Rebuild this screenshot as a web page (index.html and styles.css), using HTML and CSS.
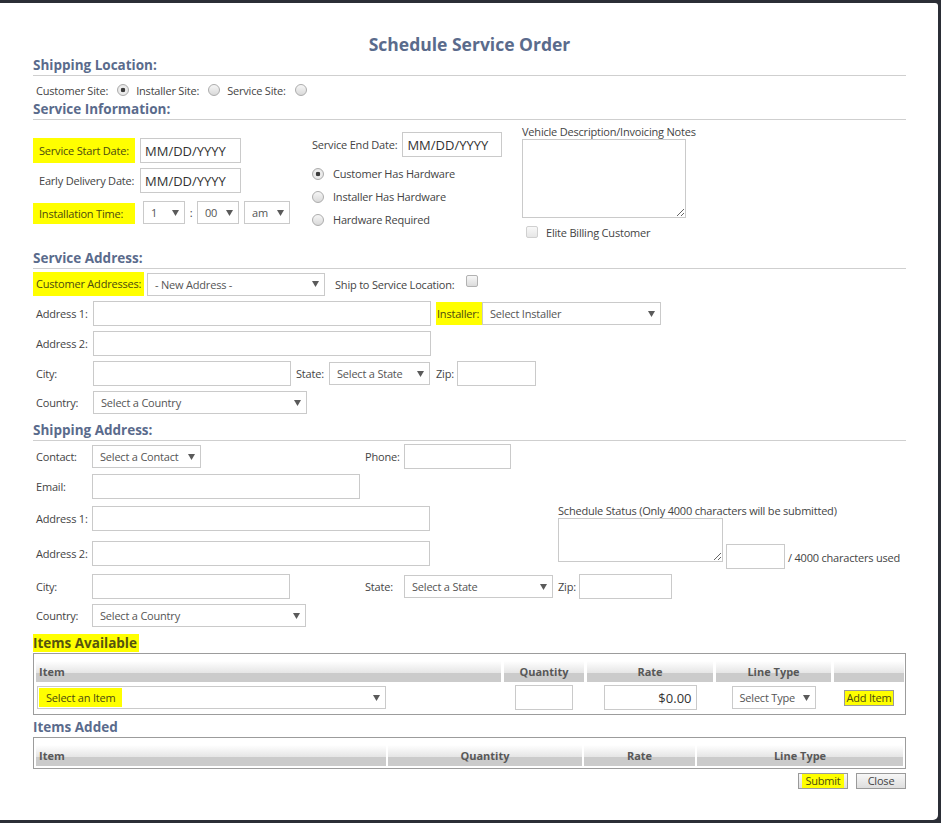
FILE: index.html
```html
<!DOCTYPE html>
<html lang="en">
<head>
<meta charset="utf-8">
<title>Schedule Service Order</title>
<link rel="stylesheet" href="styles.css">
</head>
<body>
<div class="modal">
  <h1 class="title">Schedule Service Order</h1>

  <h2 class="sec sec-shiploc">Shipping Location:</h2>
  <div class="loc-row">
    <span class="lbl">Customer Site:</span><span class="radio on loc-radio"></span>
    <span class="lbl">Installer Site:</span><span class="radio loc-radio"></span>
    <span class="lbl">Service Site:</span><span class="radio loc-radio"></span>
  </div>

  <h2 class="sec sec-info">Service Information:</h2>
  <div class="info">
    <div class="col1">
      <div class="frow">
        <span class="flabel hl">Service Start Date:</span>
        <input class="date" type="text" value="MM/DD/YYYY">
      </div>
      <div class="frow">
        <span class="flabel">Early Delivery Date:</span>
        <input class="date" type="text" value="MM/DD/YYYY">
      </div>
      <div class="frow trow">
        <span class="flabel hl tlabel">Installation Time:</span>
        <div class="sel w42 first"><span>1</span><svg class="arr" width="7" height="6" viewBox="0 0 7 6"><path d="M0 0h7L3.5 6z"/></svg></div>
        <span class="colon">:</span>
        <div class="sel w42"><span>00</span><svg class="arr" width="7" height="6" viewBox="0 0 7 6"><path d="M0 0h7L3.5 6z"/></svg></div>
        <div class="sel w46 ampm"><span>am</span><svg class="arr" width="7" height="6" viewBox="0 0 7 6"><path d="M0 0h7L3.5 6z"/></svg></div>
      </div>
    </div>
    <div class="col2">
      <div class="endrow">
        <span class="lbl">Service End Date:</span>
        <input class="date w100" type="text" value="MM/DD/YYYY">
      </div>
      <div class="rrow first"><span class="radio on"></span><span class="rlabel">Customer Has Hardware</span></div>
      <div class="rrow"><span class="radio"></span><span class="rlabel">Installer Has Hardware</span></div>
      <div class="rrow"><span class="radio"></span><span class="rlabel">Hardware Required</span></div>
    </div>
    <div class="col3">
      <div class="tlabel-top">Vehicle Description/Invoicing Notes</div>
      <textarea class="notes"></textarea>
      <div class="cbrow"><span class="checkbox disabled"></span><span class="cblabel">Elite Billing Customer</span></div>
    </div>
  </div>

  <h2 class="sec sec-addr">Service Address:</h2>
  <div class="arow arow1">
    <span class="hl calabel">Customer Addresses:</span>
    <div class="sel w178"><span>- New Address -</span><svg class="arr" width="7" height="6" viewBox="0 0 7 6"><path d="M0 0h7L3.5 6z"/></svg></div>
    <span class="lbl shiploc">Ship to Service Location:</span>
    <span class="checkbox shipcb"></span>
  </div>
  <div class="arow">
    <span class="alabel">Address 1:</span>
    <input class="txt w338" type="text">
    <span class="hl instlabel">Installer:</span>
    <div class="sel w179"><span>Select Installer</span><svg class="arr" width="7" height="6" viewBox="0 0 7 6"><path d="M0 0h7L3.5 6z"/></svg></div>
  </div>
  <div class="arow">
    <span class="alabel">Address 2:</span>
    <input class="txt w338" type="text">
  </div>
  <div class="arow">
    <span class="alabel">City:</span>
    <input class="txt w198" type="text">
    <span class="lbl statelbl">State:</span>
    <div class="sel w101"><span>Select a State</span><svg class="arr" width="7" height="6" viewBox="0 0 7 6"><path d="M0 0h7L3.5 6z"/></svg></div>
    <span class="lbl ziplbl">Zip:</span>
    <input class="txt w79" type="text">
  </div>
  <div class="arow srow">
    <span class="alabel">Country:</span>
    <div class="sel w214"><span>Select a Country</span><svg class="arr" width="7" height="6" viewBox="0 0 7 6"><path d="M0 0h7L3.5 6z"/></svg></div>
  </div>

  <h2 class="sec sec-shipaddr">Shipping Address:</h2>
  <div class="brow brow-first">
    <div class="bleft">
      <span class="blabel">Contact:</span>
      <div class="sel w109"><span>Select a Contact</span><svg class="arr" width="7" height="6" viewBox="0 0 7 6"><path d="M0 0h7L3.5 6z"/></svg></div>
    </div>
    <span class="lbl rlbl">Phone:</span>
    <input class="txt w107" type="text">
  </div>
  <div class="brow">
    <span class="blabel">Email:</span>
    <input class="txt w268" type="text">
  </div>
  <div class="mid">
    <div class="mid-left">
      <div class="brow m7">
        <span class="blabel">Address 1:</span>
        <input class="txt w338" type="text">
      </div>
      <div class="brow m10">
        <span class="blabel">Address 2:</span>
        <input class="txt w338" type="text">
      </div>
    </div>
    <div class="mid-right">
      <div class="status-label">Schedule Status (Only 4000 characters will be submitted)</div>
      <div class="status-row">
        <textarea class="status"></textarea>
        <input class="txt count" type="text">
        <span class="used">/ 4000 characters used</span>
      </div>
    </div>
  </div>
  <div class="brow">
    <div class="bleft">
      <span class="blabel">City:</span>
      <input class="txt w198" type="text">
    </div>
    <span class="lbl rlbl">State:</span>
    <div class="sel w149"><span>Select a State</span><svg class="arr" width="7" height="6" viewBox="0 0 7 6"><path d="M0 0h7L3.5 6z"/></svg></div>
    <span class="lbl zip2">Zip:</span>
    <input class="txt w93" type="text">
  </div>
  <div class="brow srow">
    <span class="blabel">Country:</span>
    <div class="sel w214"><span>Select a Country</span><svg class="arr" width="7" height="6" viewBox="0 0 7 6"><path d="M0 0h7L3.5 6z"/></svg></div>
  </div>

  <h3 class="items-title"><span class="hl-h">Items Available</span></h3>
  <div class="itembox avail">
    <div class="grid avail-grid">
      <div class="th left">Item</div>
      <div class="th">Quantity</div>
      <div class="th">Rate</div>
      <div class="th">Line Type</div>
      <div class="th"></div>
    </div>
    <div class="grid avail-grid irow">
      <div class="cell-left">
        <div class="sel w349 itemsel"><span class="hl-sel">Select an Item</span><svg class="arr" width="7" height="6" viewBox="0 0 7 6"><path d="M0 0h7L3.5 6z"/></svg></div>
      </div>
      <div class="cell"><input class="txt w58" type="text"></div>
      <div class="cell"><input class="txt w93 rate" type="text" value="$0.00"></div>
      <div class="cell"><div class="sel w84"><span>Select Type</span><svg class="arr" width="7" height="6" viewBox="0 0 7 6"><path d="M0 0h7L3.5 6z"/></svg></div></div>
      <div class="cell"><button class="btn hlbtn" type="button">Add Item</button></div>
    </div>
  </div>

  <h3 class="items-title added">Items Added</h3>
  <div class="itembox added-box">
    <div class="grid added-grid">
      <div class="th left">Item</div>
      <div class="th">Quantity</div>
      <div class="th">Rate</div>
      <div class="th">Line Type</div>
    </div>
  </div>

  <div class="actions">
    <button class="btn" type="button"><span class="hl-btn">Submit</span></button>
    <button class="btn" type="button">Close</button>
  </div>
</div>
</body>
</html>
```

FILE: styles.css
```css
* { box-sizing: border-box; }

html, body {
  margin: 0;
  padding: 0;
}

body {
  width: 941px;
  height: 823px;
  overflow: hidden;
  background: #2b2e36;
  font-family: "Open Sans", "DejaVu Sans", sans-serif;
  font-size: 11px;
  letter-spacing: -0.2px;
  color: #444;
}

.modal {
  width: 938px;
  height: 817px;
  margin-top: 3px;
  background: #fff;
  border-radius: 0 3px 5px 0;
  padding: 0 32px 0 33px;
}

/* headings */
.title {
  margin: 0;
  padding-top: 31px;
  font-size: 17.5px;
  line-height: 20px;
  font-weight: 700;
  letter-spacing: 0;
  text-align: center;
  color: #5a6b8c;
}

.sec {
  margin: 0;
  font-size: 13.5px;
  line-height: 16px;
  font-weight: 700;
  letter-spacing: 0;
  color: #5a6b8c;
  padding-bottom: 2px;
  border-bottom: 1px solid #cfcfcf;
}
.sec-shiploc { margin-top: 3px; }
.sec-info { margin-top: 3px; }
.sec-addr { margin-top: 0; }
.sec-shipaddr { margin-top: 8px; }

/* common controls */
.lbl { white-space: nowrap; }

input, textarea {
  font-family: "Open Sans", "DejaVu Sans", sans-serif;
  border: 1px solid #cacaca;
  background: #fff;
  margin: 0;
  border-radius: 0;
  outline: none;
}
input { height: 25px; padding: 0 4px; font-size: 13px; color: #333; letter-spacing: 0; }
textarea { display: block; padding: 2px; resize: both; }

.sel {
  display: flex;
  align-items: center;
  justify-content: space-between;
  height: 23px;
  border: 1px solid #cacaca;
  background: #fff;
  padding: 0 5px 0 7px;
  white-space: nowrap;
  color: #555;
}
.arr { fill: #5a5a5a; flex: none; }

.hl { background: #ffff00; color: #4a4a10; }

.radio {
  display: inline-block;
  width: 12px;
  height: 12px;
  border-radius: 50%;
  border: 1px solid #acacac;
  background: linear-gradient(#f6f6f6, #d9d9d9);
  flex: none;
}
.radio.on {
  background: radial-gradient(circle, #3c3c3c 0, #3c3c3c 2px, #f0f0f0 2.6px, #dcdcdc 100%);
}

.checkbox {
  display: inline-block;
  width: 12px;
  height: 12px;
  border: 1px solid #b2b2b2;
  border-radius: 2px;
  background: linear-gradient(#f7f7f7, #dcdcdc);
  flex: none;
}
.checkbox.disabled { border-color: #d0d0d0; background: linear-gradient(#f8f8f8, #e6e6e6); }

/* widths */
.w42 { width: 42px; }
.w46 { width: 46px; }
.w58 { width: 58px; }
.w79 { width: 79px; }
.w84 { width: 84px; }
.w93 { width: 93px; }
.w100 { width: 100px; }
.w101 { width: 101px; }
.w107 { width: 107px; }
.w109 { width: 109px; }
.w149 { width: 149px; }
.w178 { width: 178px; }
.w179 { width: 179px; }
.w198 { width: 198px; }
.w214 { width: 214px; }
.w268 { width: 268px; }
.w338 { width: 338px; }
.w349 { width: 349px; }

/* shipping location */
.loc-row {
  display: flex;
  align-items: center;
  height: 16px;
  margin-top: 6px;
  padding-left: 3px;
}
.loc-radio {
  align-self: flex-start;
  margin: 2px 7px 0 9px;
}

/* service information */
.info {
  display: flex;
  height: 130px;
}
.col1 { width: 279px; padding-top: 18px; }
.col2 { width: 210px; padding-top: 12px; }
.col3 { padding-top: 5px; }

.frow {
  display: flex;
  align-items: center;
  height: 25px;
}
.frow + .frow { margin-top: 5px; }
.frow.trow { margin-top: 8px; height: 23px; }
.flabel {
  width: 102px;
  margin-right: 5px;
  padding-left: 6px;
  line-height: 25px;
  white-space: nowrap;
}
.flabel.tlabel { line-height: 21px; align-self: flex-end; }
.date { width: 101px; }
.date.w100 { width: 100px; }
.sel.first { margin-left: 3px; }
.colon { width: 12px; text-align: center; }
.ampm { margin-left: 5px; }

.endrow {
  display: flex;
  align-items: center;
  gap: 5px;
}
.rrow {
  display: flex;
  align-items: center;
  height: 23px;
}
.rrow.first { margin-top: 5px; }
.rlabel { margin-left: 9px; }

.tlabel-top { line-height: 14px; white-space: nowrap; }
.notes { width: 164px; height: 79px; }
.cbrow {
  display: flex;
  align-items: center;
  height: 18px;
  margin-top: 5px;
}
.cbrow .checkbox { margin-left: 4px; }
.cblabel { margin-left: 8px; }

/* service address */
.arow {
  display: flex;
  align-items: center;
  height: 25px;
  margin-top: 5px;
}
.arow1 { margin-top: 3px; height: 24px; }
.arow.srow { height: 23px; }
.calabel {
  width: 111px;
  margin-right: 3px;
  padding-left: 3px;
  line-height: 24px;
  white-space: nowrap;
}
.shiploc { margin-left: 10px; }
.shipcb { align-self: flex-start; margin: 3px 0 0 11px; }
.alabel { width: 60px; padding-left: 3px; white-space: nowrap; }
.instlabel {
  margin-left: 5px;
  width: 46px;
  padding-left: 1px;
  line-height: 23px;
}
.statelbl { margin-left: 5px; width: 33px; }
.ziplbl { margin-left: 6px; width: 21px; }

/* shipping address */
.brow {
  display: flex;
  align-items: center;
  height: 25px;
  margin-top: 5px;
}
.brow-first { margin-top: 3px; }
.brow.srow { height: 23px; }
.bleft { display: flex; align-items: center; width: 332px; }
.blabel { width: 59px; padding-left: 3px; white-space: nowrap; }
.rlbl { width: 39px; }
.zip2 { margin-left: 5px; width: 21px; }

.mid {
  display: flex;
  align-items: flex-start;
  height: 70px;
}
.mid-left { width: 525px; }
.mid .m7 { margin-top: 7px; }
.mid .m10 { margin-top: 10px; }
.mid-right { padding-top: 5px; }
.status-label { line-height: 14px; white-space: nowrap; }
.status-row { display: flex; align-items: flex-start; }
.status { width: 165px; height: 44px; }
.count { width: 59px; margin: 26px 0 0 3px; }
.used { margin: 33px 0 0 3px; line-height: 14px; white-space: nowrap; }

/* items */
.items-title {
  margin: 7px 0 0;
  font-size: 13.5px;
  line-height: 18px;
  font-weight: 700;
  letter-spacing: 0;
  color: #5a6b8c;
}
.hl-h {
  display: inline-block;
  background: #ffff00;
  color: #55550f;
  padding-right: 2px;
}
.items-title.added { margin-top: 4px; line-height: 16px; }

.itembox {
  border: 1px solid #9c9c9c;
}
.avail { margin-top: 1px; padding: 7px 1px 4px 2px; }
.added-box { margin-top: 2px; padding: 7px 1px 2px 2px; }

.grid { display: grid; }
.avail-grid { grid-template-columns: 465px 80px 126px 115px 70px; column-gap: 3px; }
.added-grid { grid-template-columns: 350px 194px 111px 206px; column-gap: 2px; }

.th {
  height: 21px;
  line-height: 21px;
  font-weight: 700;
  letter-spacing: 0;
  color: #585858;
  text-align: center;
  background: linear-gradient(#ffffff 0%, #e6e6e6 55%, #cbcbcb 55%, #cbcbcb 100%);
}
.th.left { text-align: left; padding-left: 3px; }

.irow { margin-top: 3px; height: 25px; align-items: center; }
.cell { display: flex; justify-content: center; align-items: center; }
.cell-left { display: flex; align-items: center; }
.itemsel { margin-left: 1px; padding-left: 1px; }
.hl-sel {
  background: #ffff00;
  color: #4a4a10;
  line-height: 19px;
  padding: 0 7px 0 7px;
}
.rate { text-align: right; padding-right: 4px; }

.btn {
  font-family: "Open Sans", "DejaVu Sans", sans-serif;
  font-size: 11px;
  letter-spacing: -0.2px;
  color: #444;
  width: 50px;
  height: 16px;
  padding: 0;
  line-height: 14px;
  border: 1px solid #9a9a9a;
  border-radius: 0;
  background: linear-gradient(#f7f7f7, #dedede);
  cursor: pointer;
}
.hlbtn { background: #ffff00; color: #4a4a10; }
.hl-btn {
  display: inline-block;
  background: #ffff00;
  color: #4a4a10;
  padding: 0 3px;
  line-height: 14px;
}

.actions {
  display: flex;
  justify-content: flex-end;
  gap: 8px;
  margin-top: 4px;
}
```
